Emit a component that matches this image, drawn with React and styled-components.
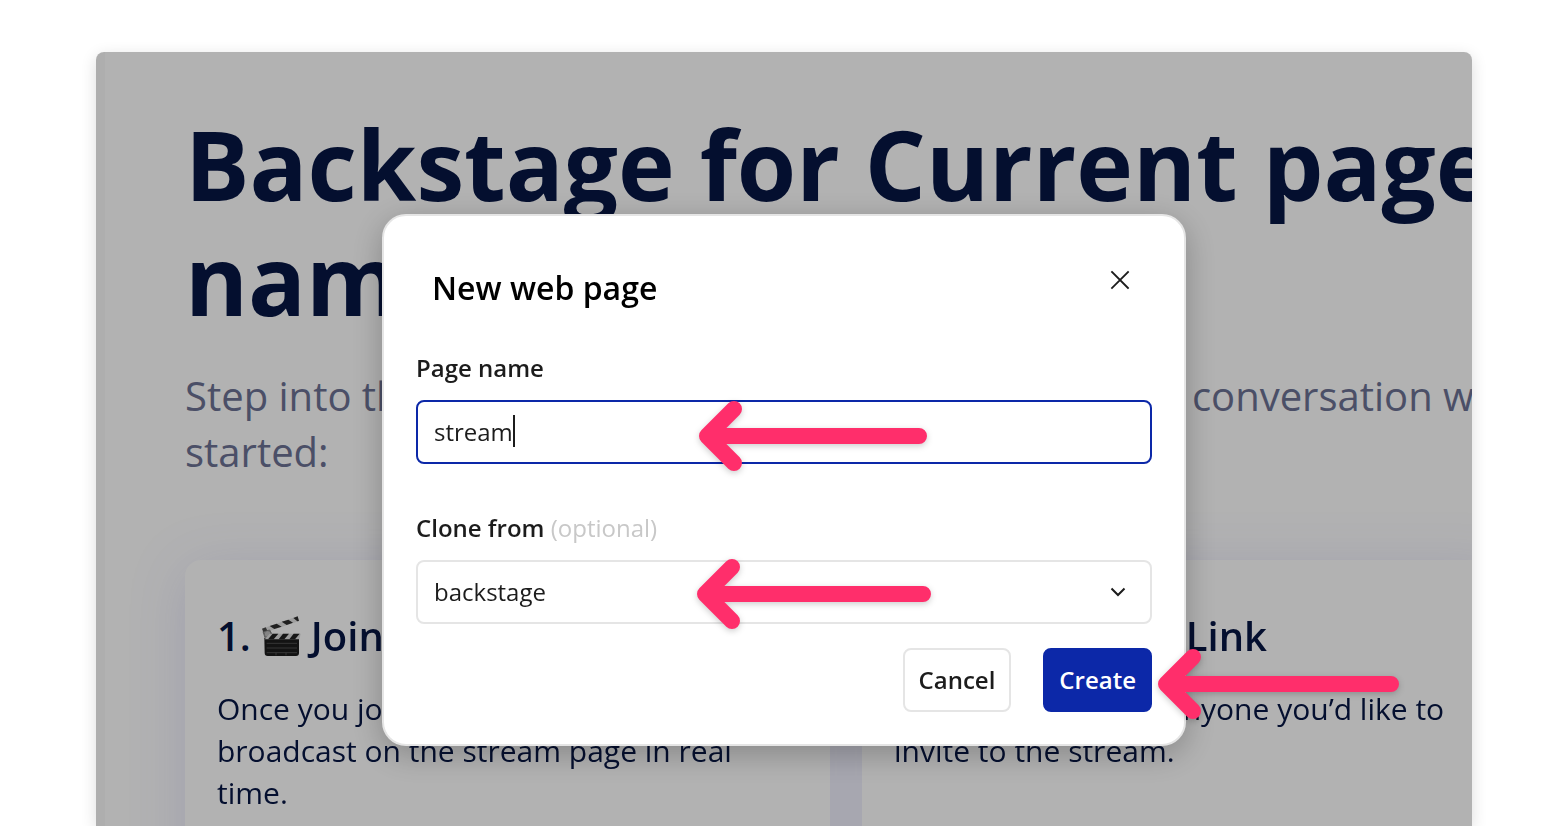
import React, { useState } from 'react'
import styled, { createGlobalStyle, css } from 'styled-components'
import { Link as LinkIcon } from 'lucide-react'

const GlobalStyle = createGlobalStyle`
  * {
    box-sizing: border-box;
  }

  body {
    margin: 0;
    background-color: #ffffff;
    font-family: "Open Sans", "Noto Sans", sans-serif;
  }

  h1, h2, h3, p {
    margin: 0;
  }

  button, input, select {
    font-family: inherit;
  }
`

const Page = styled.div`
  height: 100vh;
  padding: 52px 96px 0;
  overflow: hidden;
`

const Frame = styled.div`
  position: relative;
  min-height: 100%;
  border-radius: 8px 8px 0 0;
  box-shadow: 0 4px 16px rgba(0, 0, 0, 0.14);
`

const Site = styled.main`
  height: calc(100vh - 52px);
  padding: 54px 0 0 80px;
  overflow: hidden;
  border-left: 9px solid #fafafa;
  border-radius: 8px 8px 0 0;
  color: #071644;
`

/* the site is wider than the frame and runs off its right edge */
const SiteContent = styled.div`
  margin-right: -35px;
`

const Heading = styled.h1`
  font-size: 96px;
  line-height: 115px;
  font-weight: 700;
`

const Intro = styled.p`
  margin-top: 32px;
  font-size: 40px;
  line-height: 56px;
  color: #6c7294;
`

const Cards = styled.div`
  display: grid;
  grid-template-columns: 1fr 1fr;
  gap: 32px;
  margin-top: 80px;
  filter: drop-shadow(0 8px 28px rgba(50, 50, 215, 0.13));
`

const Card = styled.section`
  min-height: 400px;
  padding: 48px 32px;
  border-radius: 16px;
  background-color: #ffffff;

  h3 {
    display: flex;
    align-items: center;
    gap: 10px;
    font-size: 40px;
    line-height: 56px;
    font-weight: 600;
    white-space: nowrap;
  }

  p {
    margin-top: 24px;
    font-size: 30px;
    line-height: 42px;
  }
`

const Overlay = styled.div`
  position: absolute;
  inset: 0;
  display: flex;
  justify-content: center;
  align-items: flex-start;
  padding-top: 162px;
  border-radius: 8px 8px 0 0;
  background-color: rgba(0, 0, 0, 0.3);
`

const Dialog = styled.form`
  width: 100%;
  max-width: 804px;
  padding: 32px;
  border: 2px solid #e5e5e5;
  border-radius: 24px;
  background-color: #ffffff;
  box-shadow: 0 8px 32px rgba(0, 0, 0, 0.25);
  color: #1c1c1c;
`

const DialogHeader = styled.div`
  display: flex;
  justify-content: space-between;
  align-items: flex-start;
  padding: 16px 16px 40px;

  h2 {
    color: #000000;
    font-size: 32px;
    line-height: 48px;
    font-weight: 600;
  }
`

const CloseButton = styled.button`
  display: flex;
  align-items: center;
  justify-content: center;
  width: 32px;
  height: 32px;
  padding: 0;
  border: 0;
  background-color: transparent;
  color: #1c1c1c;
`

const Label = styled.label`
  display: block;
  margin-bottom: 16px;
  font-size: 24px;
  line-height: 32px;
  font-weight: 600;

  span {
    color: #c8c8c8;
    font-weight: 400;
  }
`

const box = css`
  height: 64px;
  padding: 0 16px 2px;
  border: 2px solid #e5e5e5;
  border-radius: 8px;
  background-color: #ffffff;
  color: #1c1c1c;
  font-size: 24px;
`

const TextBox = styled.div`
  ${box}
  position: relative;
  display: flex;
  align-items: center;
  margin-bottom: 48px;
  border-color: #0c28a8;

  input {
    field-sizing: content;
    padding: 0;
    border: 0;
    outline: 0;
    background-color: transparent;
    color: inherit;
    font-size: 24px;
    caret-color: transparent;
  }
`

const Caret = styled.span`
  width: 2px;
  height: 32px;
  background-color: #1c1c1c;
`

const SelectBox = styled.div`
  position: relative;
  margin-bottom: 24px;

  select {
    ${box}
    display: block;
    width: 100%;
    appearance: none;
  }
`

const Chevron = styled.svg`
  position: absolute;
  top: 24px;
  right: 26px;
  pointer-events: none;
`

const Actions = styled.div`
  display: flex;
  justify-content: flex-end;
  gap: 32px;
`

const ActionItem = styled.div`
  position: relative;
`

const Button = styled.button`
  ${box}
  padding: 0 14px 2px;
  font-weight: 600;

  ${props => props.$primary && css`
    border-color: #0c28a8;
    background-color: #0c28a8;
    color: #ffffff;
  `}
`

const ArrowSvg = styled.svg`
  position: absolute;
  top: ${props => props.$top}px;
  left: ${props => props.$left}px;
  z-index: 1;
  overflow: visible;
  pointer-events: none;
  filter: drop-shadow(0 2px 3px rgba(0, 0, 0, 0.2));
`

function Arrow({ length, top, left }) {
  return (
    <ArrowSvg width={length} height="70" $top={top} $left={left} aria-hidden="true">
      <path
        d={`M35 8 L8 35 L35 62 M8 35 H${length - 8}`}
        fill="none"
        stroke="#ff2e6b"
        strokeWidth="16"
        strokeLinecap="round"
        strokeLinejoin="round"
      />
    </ArrowSvg>
  )
}

function Clapper() {
  return (
    <svg width="40" height="40" viewBox="0 0 120 120" role="img" aria-label="Clapper board">
      <path d="M3 38 L110 1 L114 15 L8 51 Z" fill="#e2e2e2" />
      <path d="M26 30 L47 23 L62 32 L40 39 Z M62 17 L82 11 L96 20 L77 27 Z M97 6 L110 1 L114 15 L109 16 Z" fill="#2e2e2e" />
      <path d="M3 38 L14 34 L20 46 L8 50 Z" fill="#4a4a4a" />
      <path d="M6 47 L26 42 L34 56 L13 68 Z" fill="#c4c4c4" stroke="#555555" strokeWidth="2" />
      <circle cx="20" cy="54" r="10" fill="#bdbdbd" stroke="#777777" strokeWidth="2" />
      <path d="M10 66 H114 V111 Q114 120 105 120 H20 Q11 120 11 111 Z" fill="#1c1c1c" />
      <path d="M26 53 H119 L115 70 H11 Z" fill="#dedede" />
      <path d="M35 53 H52 L38 70 H21 Z M66 53 H84 L70 70 H53 Z M98 53 H116 L102 70 H85 Z" fill="#222222" />
      <path d="M17 82 H108 M17 96 H108 M17 110 H108 M45 110 V118 M75 110 V118" stroke="#666666" strokeWidth="2" />
    </svg>
  )
}

export default function App() {
  const [name, setName] = useState('stream')

  return (
    <Page>
      <GlobalStyle />
      <Frame>
        <Site>
          <SiteContent>
            <Heading>Backstage for Current page name</Heading>
            <Intro>
              Step into the backstage area to join your main private conversation we started:
            </Intro>
            <Cards>
              <Card>
                <h3>1. <Clapper /> Join the stream</h3>
                <p>
                  Once you join, you will be able to
                  broadcast on the stream page in real time.
                </p>
              </Card>
              <Card>
                <h3>2. <LinkIcon size={42} /> Share the Link</h3>
                <p>Share this link with anyone you’d like to invite to the stream.</p>
              </Card>
            </Cards>
          </SiteContent>
        </Site>

        <Overlay>
          <Dialog role="dialog" aria-labelledby="dialog-title" onSubmit={e => e.preventDefault()}>
            <DialogHeader>
              <h2 id="dialog-title">New web page</h2>
              <CloseButton type="button" aria-label="Close">
                <svg width="20" height="20" viewBox="0 0 20 20">
                  <path d="M2 2 L18 18 M18 2 L2 18" stroke="currentColor" strokeWidth="1.8" strokeLinecap="square" />
                </svg>
              </CloseButton>
            </DialogHeader>

            <Label htmlFor="page-name">Page name</Label>
            <TextBox>
              <input id="page-name" type="text" value={name} onChange={e => setName(e.target.value)} />
              <Caret />
              <Arrow length={228} top={-1} left={281} />
            </TextBox>

            <Label htmlFor="clone-from">Clone from <span>(optional)</span></Label>
            <SelectBox>
              <select id="clone-from" defaultValue="backstage">
                <option value="backstage">backstage</option>
              </select>
              <Chevron width="16" height="16" viewBox="0 0 16 16" aria-hidden="true">
                <path d="M1.5 4.5 L8 11 L14.5 4.5" fill="none" stroke="#1c1c1c" strokeWidth="2" />
              </Chevron>
              <Arrow length={234} top={-1} left={281} />
            </SelectBox>

            <Actions>
              <Button type="button">Cancel</Button>
              <ActionItem>
                <Button type="submit" $primary>Create</Button>
                <Arrow length={241} top={1} left={115} />
              </ActionItem>
            </Actions>
          </Dialog>
        </Overlay>
      </Frame>
    </Page>
  )
}
